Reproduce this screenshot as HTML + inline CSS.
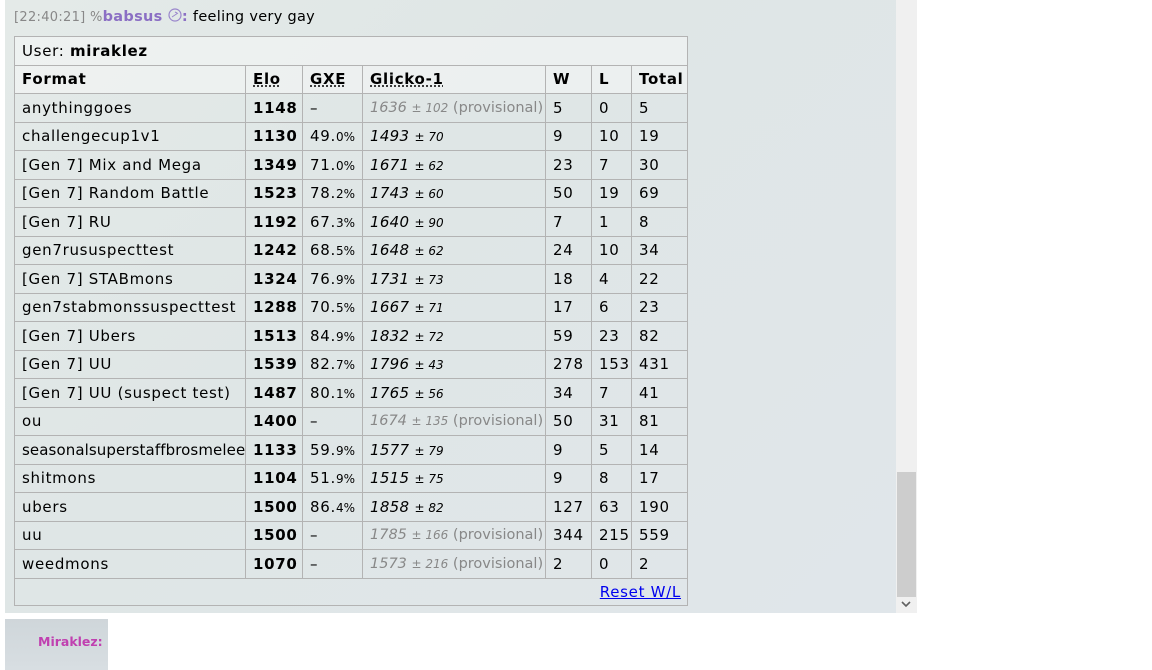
<!DOCTYPE html>
<html><head><meta charset="utf-8"><style>
*{margin:0;padding:0;box-sizing:border-box}
body{width:1152px;height:670px;background:#fff;position:relative;overflow:hidden;font-family:"DejaVu Sans","Liberation Sans",sans-serif;}
#chat{position:absolute;left:5px;top:0;width:891px;height:613px;background:linear-gradient(135deg,#e4eae8 0%,#dfe6e6 40%,#e0e6ea 100%);}
#sb{position:absolute;left:896px;top:0;width:21px;height:613px;background:#f0f0f0}
#thumb{position:absolute;left:897px;top:472px;width:19px;height:125px;background:#cdcdcd}
#arrow{position:absolute;left:901px;top:600px;width:10px;height:8px}
.line{position:absolute;left:14px;top:8px;font-size:14.5px;color:#000;white-space:nowrap;letter-spacing:0.3px}
.ts{color:#888;font-size:13px}
.nm{color:#8b6fc4;font-weight:bold}
table{position:absolute;left:14px;top:36px;width:673px;border-collapse:collapse;table-layout:fixed;font-size:15px;color:#000;letter-spacing:0.7px}
td,th{border:1px solid #b3b3b3;height:28.5px;padding:0 0 0 7px;text-align:left;white-space:nowrap;overflow:hidden}
tr.h td,tr.h th{background:rgba(245,246,246,.6)}
th{font-weight:bold}
.u{text-decoration:underline dotted;}
td.e{font-weight:bold}
.g{font-style:italic;letter-spacing:0.3px}
small{font-size:12px;letter-spacing:0}
.p{color:#888;letter-spacing:0;font-size:14.5px}
a{color:#00e;text-decoration:underline}
#bot{position:absolute;left:5px;top:619px;width:103px;height:51px;background:linear-gradient(#cfd6da,#d8dee2)}
#bot span{position:absolute;left:33px;top:15px;font-size:12.5px;font-weight:bold;color:#c040b0}
</style></head><body>
<div id="chat"></div>
<div id="sb"></div><div id="thumb"></div><svg id="arrow" viewBox="0 0 10 8"><path d="M1 2L5 6L9 2" stroke="#606060" stroke-width="1.6" fill="none"/></svg>
<div class="line"><span class="ts">[22:40:21] </span><span class="ts">%</span><span class="nm">babsus <svg width="14" height="14" viewBox="0 0 14 14" style="vertical-align:-1px"><circle cx="7" cy="7" r="6" fill="none" stroke="#9a86cc" stroke-width="1.2"/><path d="M4 9L10 5M7 4l2 1" stroke="#9a86cc" fill="none"/></svg>:</span> feeling very gay</div>
<table>
<colgroup><col style="width:231px"><col style="width:57px"><col style="width:60px"><col style="width:183px"><col style="width:46px"><col style="width:40px"><col style="width:56px"></colgroup>
<tr class="h"><td colspan="7">User: <b>miraklez</b></td></tr>
<tr class="h"><th>Format</th><th><span class="u">Elo</span></th><th><span class="u">GXE</span></th><th><span class="u">Glicko-1</span></th><th>W</th><th>L</th><th>Total</th></tr>
<tr><td>anythinggoes</td><td class="e">1148</td><td>–</td><td class="p"><i>1636 <small>± 102</small></i> (provisional)</td><td>5</td><td>0</td><td>5</td></tr>
<tr><td>challengecup1v1</td><td class="e">1130</td><td>49.<small>0%</small></td><td class="g">1493 <small>± 70</small></td><td>9</td><td>10</td><td>19</td></tr>
<tr><td>[Gen 7] Mix and Mega</td><td class="e">1349</td><td>71.<small>0%</small></td><td class="g">1671 <small>± 62</small></td><td>23</td><td>7</td><td>30</td></tr>
<tr><td>[Gen 7] Random Battle</td><td class="e">1523</td><td>78.<small>2%</small></td><td class="g">1743 <small>± 60</small></td><td>50</td><td>19</td><td>69</td></tr>
<tr><td>[Gen 7] RU</td><td class="e">1192</td><td>67.<small>3%</small></td><td class="g">1640 <small>± 90</small></td><td>7</td><td>1</td><td>8</td></tr>
<tr><td>gen7rususpecttest</td><td class="e">1242</td><td>68.<small>5%</small></td><td class="g">1648 <small>± 62</small></td><td>24</td><td>10</td><td>34</td></tr>
<tr><td>[Gen 7] STABmons</td><td class="e">1324</td><td>76.<small>9%</small></td><td class="g">1731 <small>± 73</small></td><td>18</td><td>4</td><td>22</td></tr>
<tr><td>gen7stabmonssuspecttest</td><td class="e">1288</td><td>70.<small>5%</small></td><td class="g">1667 <small>± 71</small></td><td>17</td><td>6</td><td>23</td></tr>
<tr><td>[Gen 7] Ubers</td><td class="e">1513</td><td>84.<small>9%</small></td><td class="g">1832 <small>± 72</small></td><td>59</td><td>23</td><td>82</td></tr>
<tr><td>[Gen 7] UU</td><td class="e">1539</td><td>82.<small>7%</small></td><td class="g">1796 <small>± 43</small></td><td>278</td><td>153</td><td>431</td></tr>
<tr><td>[Gen 7] UU (suspect test)</td><td class="e">1487</td><td>80.<small>1%</small></td><td class="g">1765 <small>± 56</small></td><td>34</td><td>7</td><td>41</td></tr>
<tr><td>ou</td><td class="e">1400</td><td>–</td><td class="p"><i>1674 <small>± 135</small></i> (provisional)</td><td>50</td><td>31</td><td>81</td></tr>
<tr><td style="letter-spacing:0.1px">seasonalsuperstaffbrosmelee</td><td class="e">1133</td><td>59.<small>9%</small></td><td class="g">1577 <small>± 79</small></td><td>9</td><td>5</td><td>14</td></tr>
<tr><td>shitmons</td><td class="e">1104</td><td>51.<small>9%</small></td><td class="g">1515 <small>± 75</small></td><td>9</td><td>8</td><td>17</td></tr>
<tr><td>ubers</td><td class="e">1500</td><td>86.<small>4%</small></td><td class="g">1858 <small>± 82</small></td><td>127</td><td>63</td><td>190</td></tr>
<tr><td>uu</td><td class="e">1500</td><td>–</td><td class="p"><i>1785 <small>± 166</small></i> (provisional)</td><td>344</td><td>215</td><td>559</td></tr>
<tr><td>weedmons</td><td class="e">1070</td><td>–</td><td class="p"><i>1573 <small>± 216</small></i> (provisional)</td><td>2</td><td>0</td><td>2</td></tr>
<tr><td colspan="7" style="text-align:right;padding-right:6px;height:27px"><a>Reset W/L</a></td></tr>
</table>
<div id="bot"><span>Miraklez:</span></div>
</body></html>
